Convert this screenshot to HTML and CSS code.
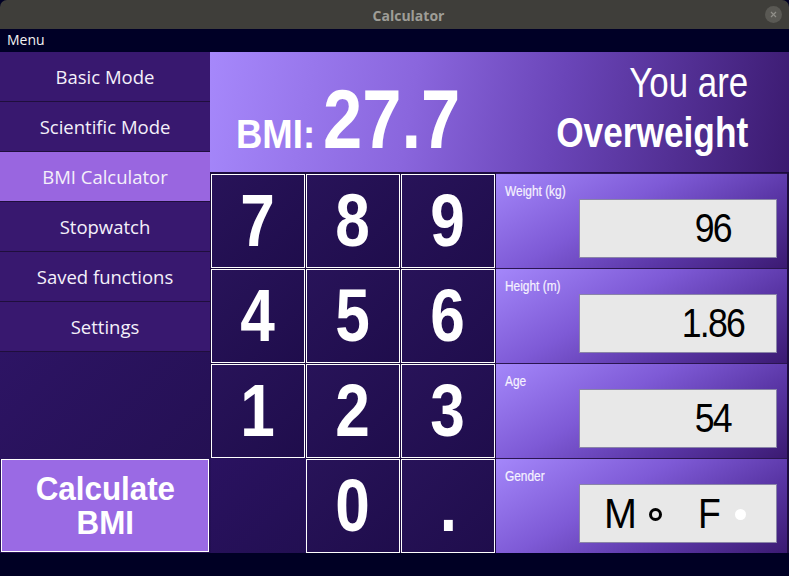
FILE: index.html
```html
<!DOCTYPE html>
<html>
<head>
<meta charset="utf-8">
<link rel="stylesheet" href="styles.css">
</head>
<body>
<div class="window">
  <div class="titlebar">
    <span class="title">Calculator</span>
    <span class="close">
      <svg width="17" height="17" viewBox="0 0 17 17"><path d="M6 6 L11 11 M11 6 L6 11" stroke="#908f89" stroke-width="1.2" fill="none"/></svg>
    </span>
  </div>
  <div class="menubar"><span>Menu</span></div>
  <div class="main">
    <div class="sidebar">
      <div class="nav">Basic Mode</div>
      <div class="nav">Scientific Mode</div>
      <div class="nav active">BMI Calculator</div>
      <div class="nav">Stopwatch</div>
      <div class="nav">Saved functions</div>
      <div class="nav">Settings</div>
      <div class="spacer"></div>
      <div class="calc-wrap"><div class="calc-btn"><span class="calc-line">Calculate</span><span class="calc-line">BMI</span></div></div>
    </div>
    <div class="content">
      <div class="display">
        <div class="bmi"><span class="bmi-label">BMI:</span><span class="bmi-value">27.7</span></div>
        <div class="verdict"><div class="you">You are</div><div class="cat">Overweight</div></div>
      </div>
      <div class="lower">
        <div class="keypad">
          <div class="key"><span class="d">7</span></div>
          <div class="key"><span class="d">8</span></div>
          <div class="key"><span class="d">9</span></div>
          <div class="key"><span class="d">4</span></div>
          <div class="key"><span class="d">5</span></div>
          <div class="key"><span class="d">6</span></div>
          <div class="key"><span class="d">1</span></div>
          <div class="key"><span class="d">2</span></div>
          <div class="key"><span class="d">3</span></div>
          <div class="key empty"></div>
          <div class="key"><span class="d">0</span></div>
          <div class="key"><span class="d">.</span></div>
        </div>
        <div class="fields">
          <div class="field">
            <span class="label">Weight (kg)</span>
            <div class="box"><span class="val">96</span></div>
          </div>
          <div class="field">
            <span class="label">Height (m)</span>
            <div class="box"><span class="val">1.86</span></div>
          </div>
          <div class="field">
            <span class="label">Age</span>
            <div class="box"><span class="val">54</span></div>
          </div>
          <div class="field">
            <span class="label">Gender</span>
            <div class="box gender"><span class="g-m">M</span><span class="ring"></span><span class="g-f">F</span><span class="dot"></span></div>
          </div>
        </div>
      </div>
    </div>
  </div>
  <div class="statusbar"></div>
</div>
</body>
</html>
```
FILE: styles.css
```css
* { box-sizing: border-box; }
html, body { margin: 0; padding: 0; background: #000024; }
.window { width: 789px; height: 576px; display: flex; flex-direction: column; overflow: hidden; }

.titlebar {
  height: 29px; flex: none; background: #3f3e3a; border-radius: 7px 7px 0 0;
  position: relative; display: flex; align-items: center; justify-content: center;
}
.title { font-family: "Open Sans", sans-serif; font-weight: 700; font-size: 14px; color: #9e9d97; margin-left: 28px; margin-top: 1px; }
.close {
  position: absolute; right: 7px; top: 6px; width: 17px; height: 17px; border-radius: 50%;
  background: #5a5954; display: flex;
}

.menubar { height: 23px; flex: none; background: #000026; display: flex; align-items: center; padding-left: 7px; }
.menubar span { font-family: "Open Sans", sans-serif; font-size: 14px; color: #f2f2f2; margin-top: -2px; }

.main { height: 501px; flex: none; display: flex; background: #1c0b3e; }

.sidebar { width: 210px; flex: none; display: flex; flex-direction: column; }
.nav {
  height: 50px; flex: none; background: #38186f; border-bottom: 1px solid #1f0e3d;
  display: flex; align-items: center; justify-content: center;
  font-family: "Open Sans", sans-serif; font-size: 18.5px; color: #f4f0fa; padding-bottom: 1px;
}
.nav.active { background: #9966e0; }
.spacer { height: 107px; flex: none; background: linear-gradient(135deg, #2d1464 0%, #241053 100%); }
.calc-wrap { flex: 1; padding: 0 1px 1px 1px; background: #241052; display: flex; }
.calc-btn {
  flex: 1; background: #9a6ae4; border: 1px solid #ffffff;
  display: flex; flex-direction: column; align-items: center; justify-content: center;
  font-family: "Liberation Sans", sans-serif; font-weight: 700;
  font-size: 33px; color: #ffffff; padding-top: 1px;
}
.calc-line { display: block; height: 34px; line-height: 34px; transform: scaleX(0.95); white-space: nowrap; }

.content { flex: 1; display: flex; flex-direction: column; }
.display {
  height: 120px; flex: none; margin-bottom: 1px;
  background: linear-gradient(100deg, #a688fb 0%, #8a66dd 35%, #6a45b8 60%, #3b1a70 100%);
  display: flex; justify-content: space-between; color: #ffffff;
  font-family: "Liberation Sans", sans-serif; white-space: nowrap;
}
.bmi { display: flex; align-items: baseline; align-self: flex-end; padding-left: 26px; padding-bottom: 11px; line-height: 1; }
.bmi-label { display: inline-block; width: 79px; font-weight: 700; font-size: 41px; margin-right: 8px; transform: scaleX(0.89); transform-origin: left center; }
.bmi-value { display: inline-block; width: 140px; font-weight: 700; font-size: 84px; transform: scaleX(0.84); transform-origin: left center; }
.verdict { text-align: right; padding-right: 41px; padding-top: 6px; }
.you { font-size: 42px; line-height: 50px; transform: scaleX(0.83); transform-origin: right center; }
.cat { font-size: 43px; font-weight: 700; line-height: 49px; transform: scaleX(0.82); transform-origin: right center; }

.lower { flex: 1; display: flex; }
.keypad {
  width: 286px; flex: none; display: grid; grid-template-columns: repeat(3, 94px); grid-template-rows: repeat(4, 94px);
  gap: 1px; padding: 1px 0 0 1px; background: #1b0b3e;
}
.key {
  border: 1px solid #ffffff; background: linear-gradient(135deg, #281359 0%, #1f0d4c 100%);
  display: flex; align-items: center; justify-content: center;
  font-family: "Liberation Sans", sans-serif; font-weight: 700; font-size: 74px; color: #ffffff;
  padding-bottom: 2px;
}
.d { display: inline-block; transform: scaleX(0.84); }
.key.empty { border-color: transparent; background: linear-gradient(135deg, #2a1260 0%, #220f52 100%); margin: -1px; }

.fields { flex: 1; display: flex; flex-direction: column; padding-right: 2px; background: #1e0d40; }
.field {
  height: 95px; flex: none; border-top: 1px solid #2a1550;
  background: linear-gradient(150deg, #a487fa 0%, #7e5ad6 40%, #5a36a6 70%, #3b1a72 100%);
  position: relative; padding: 8px 0 0 9px;
}
.label {
  display: inline-block; font-family: "Liberation Sans", sans-serif; font-size: 14px; color: #f6f2ff;
  transform: scaleX(0.85); transform-origin: left center; white-space: nowrap;
  -webkit-text-stroke: 0.2px #f6f2ff;
}
.box {
  position: absolute; left: 83px; top: 25px; width: 198px; height: 59px;
  background: #e8e8e8; border: 1px solid #8a84a8;
  display: flex; align-items: center; justify-content: center; padding-left: 67px;
  font-family: "Liberation Sans", sans-serif; font-size: 41px; color: #000000;
}
.val { display: inline-block; letter-spacing: -2px; transform: scaleX(0.87); margin-right: -2px; }
.box.gender { justify-content: flex-start; padding-left: 24px; font-size: 42px; }
.g-m { display: inline-block; width: 33px; margin-right: 12px; transform: scaleX(0.94); transform-origin: left center; }
.ring { width: 13px; height: 13px; border: 3px solid #000; border-radius: 50%; margin-right: 36px; margin-top: 2px; flex: none; }
.g-f { display: inline-block; width: 23px; margin-right: 14px; transform: scaleX(0.89); transform-origin: left center; }
.dot { width: 11px; height: 11px; border-radius: 50%; background: #ffffff; margin-top: 1px; flex: none; }

.statusbar { flex: 1; background: #000024; }
```
